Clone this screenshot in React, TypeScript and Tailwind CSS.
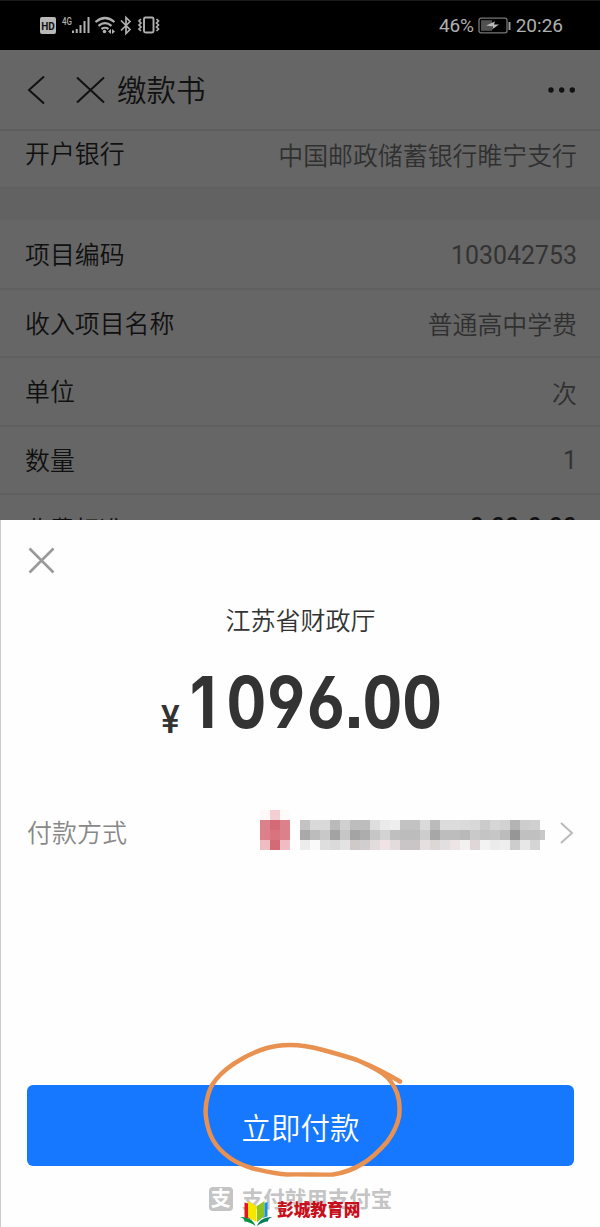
const rows = [
    { label: '项目编码', value: '103042753', box: 'h-[70px] pt-1' },
    { label: '收入项目名称', value: '普通高中学费', box: 'h-[68px] pt-[3px]' },
    { label: '单位', value: '次', box: 'h-[69px] pt-[3px]' },
    { label: '数量', value: '1', box: 'h-[68px] pt-[3px]' },
    { label: '收费标准', value: '0.00-0.00', box: 'h-[68px] pt-[4px]', dark: true },
]

// censored bank card, 10px blocks
const mosaic = [
    ['#fdf9f9', '#f3cfd3', '#fdfafa'],
    ['#dc8089', '#d36a75', '#dc8089', '', '#c3c3c3', '#d9d9d9', '#d9d9d9', '#bababa', '#d0d0d0', '#bdbdbd', '#bdbdbd', '#dedede', '#eaeaea', '#eeeeee', '#c2c2c2', '#c2c2c2', '#dadada', '#bbbbbb', '#dcdcdc', '#dcdcdc', '#dadada', '#d8d8d8', '#cbcbcb', '#d6d6d6', '#d2d2d2', '#b4b4b4', '#cdcdcd', '#d0d0d0'],
    ['#dc8089', '#d9747e', '#dc8089', '', '#a9a9a9', '#bcbcbc', '#c8c8c8', '#a3a3a3', '#c6c6c6', '#a4a4a4', '#adadad', '#c6c6c6', '#d3d3d3', '#bfbfbf', '#bcbcbc', '#bcbcbc', '#cdcdcd', '#a7a7a7', '#bdbdbd', '#bdbdbd', '#b9b9b9', '#c9c9c9', '#c4c4c4', '#c6c6c6', '#bcbcbc', '#969696', '#c0c0c0', '#c0c0c0', '#c8c8c8'],
    ['#eebcc1', '#d36a75', '#eebcc1', '', '#ececec', '#fafafa', '#dedede', '#dadada', '#e3e3e3', '#cfc9ca', '#d2cdce', '#e3dcdd', '#efe3e5', '#e2dcdd', '#c9c5c6', '#c9c5c6', '#e6dfe0', '#ddd6d7', '#e3dfe0', '#ece4e5', '#f3f0f0', '#dfd6d8', '#f3f3f3', '#ebebeb', '#eeeeee', '#cdcdcd', '#e7e7e7', '#d5d5d5'],
]

const valueStyle = (value: string, dark?: boolean) => {
    if (dark) return 'pb-1 font-medium text-[#101010]'
    return /^\d/.test(value) ? 'pb-px font-normal text-[#333]' : 'pt-[3px] text-[#303030]'
}

const Row = ({ label, value, box, dark }: { label: string; value: string; box: string; dark?: boolean }) => (
    <div className={`flex items-center justify-between border-b-2 border-[#606060] pl-[25px] pr-[23px] ${box}`}>
        <span className={dark ? 'pt-0.5 text-[#101010]' : 'text-[#101010]'}>{label}</span>
        <span className={valueStyle(value, dark)}>{value}</span>
    </div>
)

const StatusBar = () => (
    <div className="flex h-[50px] items-center border-t border-[#1a1a1a] bg-black pb-px pl-10 pr-[37px] text-[#b0b0b0]">
        <svg className="h-6 w-[122px]" viewBox="40 13 122 24" fill="none" stroke="currentColor">
            <rect x="40" y="17" width="16" height="17" rx="2" fill="#b8b8b8" stroke="none" />
            <text x="41.200" y="29.500" fontSize="11" fontWeight="700" fontFamily="Roboto, sans-serif" fill="#111" stroke="none" textLength="13.600" lengthAdjust="spacingAndGlyphs">HD</text>
            <text x="62" y="24.500" fontSize="10.500" fontWeight="500" fontFamily="Roboto, sans-serif" fill="currentColor" stroke="none" textLength="10" lengthAdjust="spacingAndGlyphs">4G</text>
            <path strokeWidth="2" d="M73 30.5v2.5M76.700 29v4M80.500 25v8M84.500 21v12M88.500 17v16" />
            <path strokeWidth="2.200" d="M95.500 22q9.500-8 19 0M98.500 25.800q6.500-5.500 13 0M101.500 29q3.500-2.500 7 0" />
            <circle cx="104.500" cy="31.500" r="1.800" fill="currentColor" stroke="none" />
            <path fill="currentColor" stroke="none" d="M108 31.500l3-2.500v5zM115 31.500l-3-2.500v5z" />
            <path strokeWidth="1.700" d="M121 20.500l9 9-4 4v-16l4 4-9 9" />
            <rect x="144" y="17.500" width="9.500" height="15" rx="1.500" strokeWidth="1.900" />
            <path strokeWidth="1.700" d="M141 19l-2 2 2 2-2 2 2 2-2 2 2 2M156.500 19l2 2-2 2 2 2-2 2 2 2-2 2" />
        </svg>
        <div className="ml-auto flex items-center pt-px font-[Roboto] text-[19px] leading-6">
            <span className="tracking-[-0.2px]">46%</span>
            <svg className="ml-1 mr-[5px] h-[18px] w-[33px]" viewBox="0 0 33 18" fill="none">
                <rect x="1" y="1.200" width="28" height="14.600" rx="2" stroke="#777" strokeWidth="1.300" />
                <rect x="3" y="3.200" width="11" height="10.600" fill="#505050" />
                <path d="M8 8.500l9-4-1 3h5l-7 5 1-3z" fill="#b8b8b8" />
                <path d="M31.500 5v8" stroke="#999" strokeWidth="2" />
            </svg>
            <span>20:26</span>
        </div>
    </div>
)

const Header = () => (
    <div className="flex h-[81px] items-center border-b-2 border-[#5e5e5e] pt-px pl-[27px] pr-[24px] text-[#111]">
        <svg className="h-[30px] w-[18px]" viewBox="0 0 18 30" fill="none" stroke="currentColor" strokeWidth="2"><path d="M17 1.500L2 15l15 13.500" /></svg>
        <svg className="ml-[31px] h-[28px] w-[29px]" viewBox="0 0 29 28" fill="none" stroke="currentColor" strokeWidth="2"><path d="M1 1.500l27 25M28 1.500l-27 25" /></svg>
        <h1 className="ml-3 pt-0.5 text-[29.500px] font-[350] leading-10">缴款书</h1>
        <svg className="ml-auto h-[6px] w-[28px]" viewBox="0 0 28 6" fill="currentColor"><circle cx="3" cy="3" r="2.700" /><circle cx="13.700" cy="3" r="2.700" /><circle cx="24.300" cy="3" r="2.700" /></svg>
    </div>
)

const SiteMark = () => (
    <div className="absolute bottom-0 left-[240px] flex items-end">
        <svg className="h-[28px] w-[33px]" viewBox="0 0 33 28">
            <path d="M4.500 3.500l4 1v14l8 4.500c-3-2-7-4-12-4z" fill="#e3171b" />
            <path d="M8 2l8.500 5v16L8 18z" fill="#f7e600" />
            <path d="M17 7l7.500-5v15L17 23z" fill="#8fc31f" />
            <path d="M24.500 4l3-1v14.500c-4 .5-8 2.500-10.500 5.500l7.500-6z" fill="#1b8fe0" />
            <path d="M0 18c7 0 13 2 15.500 9-4-3-8-4.500-11-4.500 0-2-1.500-4-4.500-4.500z" fill="#00923f" />
            <path d="M32.500 18c-7 0-13 2-15.500 9 4-3 8-4.500 11-4.500 0-2 1.500-4 4.500-4.500z" fill="#0a7f5a" />
        </svg>
        <span className="mb-[3px] ml-1 text-[16.700px] font-black leading-[26px] text-[#c8101c]">彭城教育网</span>
    </div>
)

export default function App() {
    return (
        <div className="relative flex h-[1227px] w-[600px] flex-col overflow-hidden bg-[#666] font-['Roboto','Noto_Sans_CJK_SC',sans-serif]">
            <StatusBar />
            <Header />
            <div className="h-[389px] overflow-hidden text-[24.900px] font-[350] leading-9">
                <Row label="开户银行" value="中国邮政储蓄银行睢宁支行" box="h-[58px] pb-2" />
                <div className="h-[31px] bg-[#626262]" />
                {rows.map((row) => <Row key={row.label} {...row} />)}
            </div>

            <div className="flex h-[707px] flex-col border-l border-[#ccc] bg-[#fefefe] px-[26px]">
                <svg className="mt-[27px] ml-px h-[27px] w-[27px] shrink-0" viewBox="0 0 27 27" fill="none" stroke="#999" strokeWidth="2.600"><path d="M1.500 1.500l24 24M25.500 1.500l-24 24" /></svg>
                <h2 className="mt-[30px] text-center text-[25px] font-[350] leading-9 text-[#333]">江苏省财政厅</h2>
                <div className="mt-5 flex h-[84px] shrink-0 items-baseline pl-[134px] text-[#333]">
                    <span className="relative top-[5px] w-[27px] origin-left scale-x-90 text-[39px] leading-10 font-medium">¥</span>
                    <span className="flex origin-left scale-x-[0.855] font-[Inter] text-[72px] font-bold leading-[84px]">
                        <span className="w-[45px] pl-0.5">1</span>
                        <span className="[font-feature-settings:'cv03','cv04','tnum','ss07']">096.00</span>
                    </span>
                </div>
                <div className="mt-[60px] flex h-[60px] shrink-0 items-center">
                    <span className="text-[25px] font-[350] text-[#888]">付款方式</span>
                    <div className="ml-auto mt-[-8px] h-[40px] w-[285px] overflow-hidden">
                        {mosaic.map((line, i) => (
                            <div key={i} className="flex">
                                {line.map((color, j) => <i key={j} className="h-[10px] w-[10px] shrink-0" style={{ background: color }} />)}
                            </div>
                        ))}
                    </div>
                    <svg className="mt-[-3px] ml-[15px] h-[22px] w-[14px]" viewBox="0 0 14 22" fill="none" stroke="#bbb" strokeWidth="2"><path d="M1 1l11 10L1 21" /></svg>
                </div>
                <button className="mt-[221px] h-[81px] shrink-0 rounded-md bg-[#1677ff] pt-[7px] text-[29.500px] font-[350] text-white">立即付款</button>
                <div className="mt-3.5 flex items-center justify-center text-[#c4c4c4]">
                    <div className="mr-[9px] flex h-[24px] w-[24px] items-center justify-center rounded bg-[#c4c4c4] text-[20px] font-bold leading-none text-[#fefefe]">支</div>
                    <span className="pt-0.5 text-[21.500px] font-bold leading-9">支付就用支付宝</span>
                </div>
            </div>

            <svg className="absolute top-[1036px] left-[196px] h-[146px] w-[212px]" viewBox="196 1036 212 146" fill="none" stroke="#e89150" strokeWidth="4.500" strokeLinecap="round" strokeLinejoin="round">
                <path d="M400 1081.500C386 1073 372 1066 357 1060C345 1056 334 1053 323 1050C312 1047 301 1045 290 1045C282 1045 274 1046 267 1048C257 1051 248 1055 240 1060C233 1064 226 1069 220 1075C214 1081 210 1087 208 1095C206 1102 205 1110 206 1117C207 1125 209 1133 213 1140C217 1147 223 1153 230 1158C237 1163 245 1166 253 1168.500C264 1171 275 1174 287 1174.500C302 1174 318 1175 333 1174.500C344 1173 354 1169 363 1163.500C372 1158 380 1150 387 1142C393 1134 397 1126 399 1117C400 1109 400 1101 397 1093C394 1085 389 1078 382 1073C374 1068 366 1064 357 1060" />
            </svg>
            <SiteMark />
        </div>
    )
}
